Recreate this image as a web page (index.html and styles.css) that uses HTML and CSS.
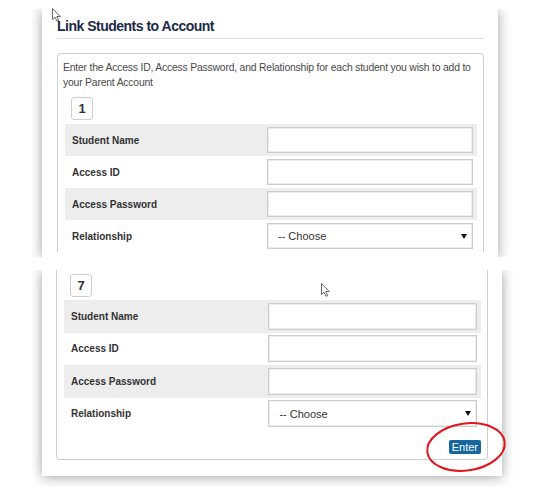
FILE: index.html
```html
<!DOCTYPE html>
<html>
<head>
<meta charset="utf-8">
<link rel="stylesheet" href="styles.css">
</head>
<body>
<div class="shot">
  <div class="clip clip-top">
    <div class="card card-top">
      <h2 class="title">Link Students to Account</h2>
      <div class="box box-open-bottom">
        <p class="intro">Enter the Access ID, Access Password, and Relationship for each student you wish to add to your Parent Account</p>
        <div class="num">1</div>
        <div class="rows">
          <div class="row shade"><span class="label">Student Name</span><span class="field"></span></div>
          <div class="row"><span class="label">Access ID</span><span class="field"></span></div>
          <div class="row shade"><span class="label">Access Password</span><span class="field"></span></div>
          <div class="row"><span class="label">Relationship</span><span class="field select"><span>-- Choose</span><svg class="caret" width="6" height="5" viewBox="0 0 6 5"><path d="M0 0H6L3 5Z" fill="#111"/></svg></span></div>
        </div>
      </div>
    </div>
  </div>
  <div class="clip clip-bottom">
    <div class="card card-bottom">
      <div class="box box-open-top">
        <div class="num">7</div>
        <div class="rows rows-tall">
          <div class="row shade"><span class="label">Student Name</span><span class="field"></span></div>
          <div class="row"><span class="label">Access ID</span><span class="field"></span></div>
          <div class="row shade"><span class="label">Access Password</span><span class="field"></span></div>
          <div class="row"><span class="label">Relationship</span><span class="field select"><span>-- Choose</span><svg class="caret" width="6" height="5" viewBox="0 0 6 5"><path d="M0 0H6L3 5Z" fill="#111"/></svg></span></div>
        </div>
        <div class="actions"><span class="btn">Enter</span></div>
      </div>
    </div>
  </div>

  <svg class="cursor cursor-a" width="10" height="14" viewBox="0 0 10 14"><path d="M0.5 0.5V11.5L3 9.2L5 13.3L6.7 12.5L4.8 8.5H8.2Z" fill="#fff" stroke="#555" stroke-width="0.9" stroke-linejoin="round"/></svg>
  <svg class="cursor cursor-b" width="10" height="14" viewBox="0 0 10 14"><path d="M0.5 0.5V11.5L3 9.2L5 13.3L6.7 12.5L4.8 8.5H8.2Z" fill="#fff" stroke="#555" stroke-width="0.9" stroke-linejoin="round"/></svg>
  <svg class="circle" width="90" height="60" viewBox="0 0 90 60"><ellipse cx="45" cy="30" rx="39" ry="23.5" transform="rotate(-8 45 30)" fill="none" stroke="#e3141b" stroke-width="2"/></svg>
</div>
</body>
</html>
```

FILE: styles.css
```css
* { box-sizing: border-box; }
html, body { margin: 0; padding: 0; background: #fff; }
body { font-family: "Liberation Sans", Arial, sans-serif; color: #333; }

.shot {
  position: relative;
  width: 539px;
  height: 492px;
  padding-top: 9px;
}

.clip {
  overflow: hidden;
  margin-left: 32px;
  width: fit-content;
}
.clip-top { padding: 0 14px 0 10px; }
.clip-bottom { padding: 0 11px 11px 10px; margin-top: 13px; }

.card {
  background: #fff;
  box-shadow: 0 1px 12px rgba(0, 0, 0, 0.38);
  overflow: hidden;
}
.card-top { width: 456px; height: 248px; padding: 7px 14px 0 15px; }
.card-bottom { width: 460px; height: 206px; padding: 0 14px 16px 14px; }

.title {
  margin: 0;
  font-size: 14px;
  letter-spacing: -0.5px;
  line-height: 20px;
  font-weight: bold;
  color: #1b2a48;
  padding-bottom: 2px;
  border-bottom: 1px solid #dcdcdc;
}

.box {
  border: 1px solid #cfcfcf;
  padding: 6px 6px 0 7px;
}
.box-open-bottom { margin-top: 14px; border-bottom: none; border-radius: 4px 4px 0 0; }
.box-open-top { border-top: none; border-radius: 0 0 4px 4px; padding: 4px 6px 5px 7px; }

.intro {
  margin: 0 0 0 -2px;
  font-size: 10.4px;
  letter-spacing: -0.2px;
  line-height: 15px;
  color: #4a4a4a;
}

.num {
  margin: 7px 0 0 6px;
  width: 22px;
  height: 23px;
  border: 1px solid #cfcfcf;
  border-radius: 3px;
  display: flex;
  align-items: center;
  justify-content: center;
  font-size: 13px;
  font-weight: bold;
  color: #333;
}
.box-open-top .num { margin-top: 0; }

.rows { margin-top: 4px; }
.rows-tall { margin-top: 3px; }

.row {
  display: grid;
  grid-template-columns: 49.5% 1fr;
  align-items: center;
  height: 32px;
  padding-right: 4px;
}
.rows-tall .row { height: 32.5px; }
.row.shade { background: #ededed; }

.label {
  padding-left: 7px;
  font-size: 10px;
  font-weight: bold;
  color: #333;
}

.field {
  height: 26px;
  background: #fff;
  border: 1px solid #cdcdcd;
  box-shadow: inset 0 0 0 1px #ececec;
}
.rows-tall .field { height: 27px; }

.select {
  display: flex;
  align-items: center;
  justify-content: space-between;
  padding: 0 5px 0 10px;
  font-size: 11px;
  color: #333;
}
.caret { display: block; }

.actions {
  display: flex;
  justify-content: flex-end;
  margin-top: 10px;
}
.btn {
  height: 14px;
  line-height: 14px;
  padding: 0 3px;
  background: #16679f;
  color: #fff;
  font-size: 11px;
  border-radius: 2px;
}

.cursor { position: absolute; }
.cursor-a { left: 52px; top: 8px; }
.cursor-b { left: 321px; top: 283px; }
.circle { position: absolute; left: 421px; top: 417px; }
```
